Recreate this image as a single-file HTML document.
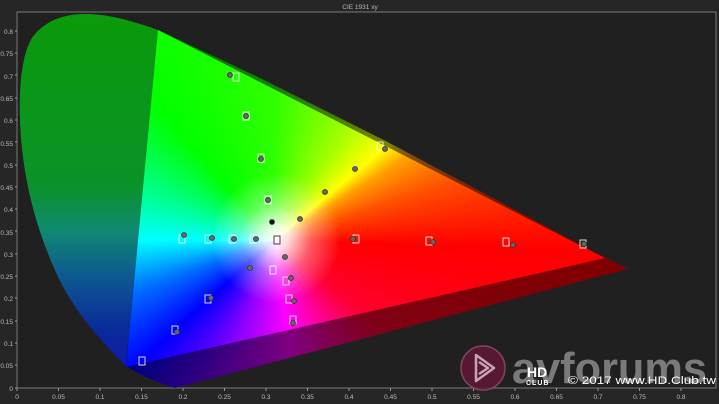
<!DOCTYPE html>
<html><head><meta charset="utf-8"><style>
html,body{margin:0;padding:0;background:#262626;width:719px;height:404px;overflow:hidden;position:relative;}
svg{display:block;font-family:"Liberation Sans",sans-serif;position:absolute;left:0;top:0;}
.l{position:absolute;left:0;top:0;width:719px;height:404px;}
.conic{background:conic-gradient(from 0deg at 275px 240px,#30ff00 0deg,#a0ff00 32deg,#ffff00 50deg,#ffa000 58deg,#ff5000 72deg,#ff0000 92deg,#ff0030 130deg,#ff00b0 155deg,#ff00ff 172deg,#9000ff 200deg,#0000ff 228deg,#0070ff 250deg,#00ffff 270deg,#00ff90 290deg,#00ff00 318deg,#30ff00 360deg);}
#loc{clip-path:path('M175,388 C150,380 135,372 125,365 C95,335 70,305 55,270 C35,225 22,175 20,120 C19,85 22,55 32,38 C45,20 65,14 85,14 C110,14 135,22 158,30 L260,78 L385,140.6 L494.4,198.8 L591,250.5 L628,269 Z');}
#locin{filter:brightness(0.5);}
#left{clip-path:polygon(0 0,161px 0,122px 404px,0 404px);background:linear-gradient(to bottom,#0a9a0a 14px,#0b9228 185px,#0f8a70 230px,#0d5a90 275px,#0a2a9a 330px,#1a10b0 388px);}
#tri{clip-path:polygon(158px 30px,605px 258px,126px 367px);}
#white{background:radial-gradient(circle at 276px 238px,rgba(255,255,255,1) 0,rgba(255,255,255,.85) 12px,rgba(255,255,255,.35) 35px,rgba(255,255,255,0) 65px);}
</style></head><body>
<svg width="719" height="404" viewBox="0 0 719 404" xmlns="http://www.w3.org/2000/svg">
<rect x="0" y="0" width="719" height="404" fill="#262626"/>
<rect x="17" y="12" width="699" height="376" fill="#202020" stroke="#7a7a7a" stroke-width="1"/>
</svg>
<div class="l" id="loc"><div class="l conic" id="locin"></div><div class="l" id="left"></div></div>
<div class="l" id="tri"><div class="l conic"></div><div class="l" id="white"></div></div>
<svg width="719" height="404" viewBox="0 0 719 404" xmlns="http://www.w3.org/2000/svg">
<text x="360" y="9" font-size="6.5" fill="#bbb" text-anchor="middle">CIE 1931 xy</text>
<g fill="none" stroke="#fff" stroke-width="1" opacity="0.85">
<rect x="233" y="73" width="6" height="8"/><rect x="243" y="112" width="6" height="8"/><rect x="258" y="154" width="6" height="8"/><rect x="265" y="196" width="6" height="8"/>
<rect x="274" y="236" width="6" height="8" stroke="#222"/><rect x="283" y="277" width="6" height="8"/><rect x="286" y="295" width="6" height="8"/><rect x="290" y="316" width="6" height="8"/>
<rect x="270" y="266" width="6" height="8"/><rect x="205" y="295" width="6" height="8"/><rect x="172" y="326" width="6" height="8"/><rect x="139" y="357" width="6" height="8"/>
<rect x="179" y="235" width="6" height="8"/><rect x="205" y="235" width="6" height="8"/><rect x="229" y="235" width="6" height="8"/><rect x="250" y="235" width="6" height="8"/>
<rect x="353" y="235" width="6" height="8"/><rect x="426" y="237" width="6" height="8"/><rect x="503" y="238" width="6" height="8"/><rect x="580" y="240" width="6" height="8"/><rect x="377" y="142" width="6" height="8"/>
</g>
<g fill="#666" stroke="#333" stroke-width="0.8">
<circle cx="230" cy="75" r="2.5"/><circle cx="246" cy="116" r="2.5"/><circle cx="261" cy="159" r="2.5"/><circle cx="268" cy="200" r="2.5"/>
<circle cx="325" cy="192" r="2.5"/><circle cx="355" cy="169" r="2.5"/><circle cx="385" cy="149" r="2.5"/><circle cx="300" cy="219" r="2.5"/>
<circle cx="272" cy="222" r="2.5" fill="#111"/><circle cx="285" cy="257" r="2.5"/><circle cx="250" cy="268" r="2.5"/><circle cx="291" cy="278" r="2.5"/><circle cx="294" cy="301" r="2.5"/><circle cx="293" cy="323" r="2.5"/>
<circle cx="211" cy="298" r="2.5"/><circle cx="177" cy="332" r="2.5"/><circle cx="184" cy="235" r="2.5"/><circle cx="212" cy="238" r="2.5"/><circle cx="234" cy="239" r="2.5"/><circle cx="256" cy="239" r="2.5"/>
<circle cx="353" cy="239" r="2.5"/><circle cx="433" cy="242" r="2.5"/><circle cx="513" cy="245" r="2.5"/><circle cx="584" cy="244" r="2.5"/>
</g>

<g font-size="6.5" fill="#bbb" text-anchor="end">
<text x="13" y="34">0.8</text><text x="13" y="56">0.75</text><text x="13" y="79">0.7</text><text x="13" y="101">0.65</text><text x="13" y="123">0.6</text><text x="13" y="146">0.55</text><text x="13" y="168">0.5</text><text x="13" y="190">0.45</text><text x="13" y="212">0.4</text><text x="13" y="235">0.35</text><text x="13" y="257">0.3</text><text x="13" y="279">0.25</text><text x="13" y="301">0.2</text><text x="13" y="324">0.15</text><text x="13" y="346">0.1</text><text x="13" y="368">0.05</text><text x="13" y="391">0</text>
</g>
<g stroke="#999" stroke-width="1">
<path d="M15,31H17M15,53H17M15,75H17M15,98H17M15,120H17M15,142H17M15,165H17M15,187H17M15,209H17M15,231H17M15,254H17M15,276H17M15,298H17M15,321H17M15,343H17M15,365H17M15,388H17"/>
<path d="M17,388V391M58.5,388V391M100,388V391M141.5,388V391M183,388V391M224.5,388V391M266,388V391M307.5,388V391M349,388V391M390.5,388V391M432,388V391M473.5,388V391M515,388V391M556.5,388V391M598,388V391M639.5,388V391M681,388V391"/>
</g>
<g font-size="6.5" fill="#bbb" text-anchor="middle">
<text x="17" y="399">0</text><text x="58.5" y="399">0.05</text><text x="100" y="399">0.1</text><text x="141.5" y="399">0.15</text><text x="183" y="399">0.2</text><text x="224.5" y="399">0.25</text><text x="266" y="399">0.3</text><text x="307.5" y="399">0.35</text><text x="349" y="399">0.4</text><text x="390.5" y="399">0.45</text><text x="432" y="399">0.5</text><text x="473.5" y="399">0.55</text><text x="515" y="399">0.6</text><text x="556.5" y="399">0.65</text><text x="598" y="399">0.7</text><text x="639.5" y="399">0.75</text><text x="681" y="399">0.8</text>
</g>

<circle cx="483" cy="368" r="22" fill="#5e1836" stroke="#8a4a66" stroke-width="1.5" opacity="0.9"/>
<path d="M476,355 L494,368 L476,381 Z M479,362 L488,368 L479,374" fill="none" stroke="#c9a3b4" stroke-width="2.5" stroke-linejoin="round"/>
<text x="512" y="383" font-size="44" font-weight="bold" fill="#8a8a8a" opacity="0.85" textLength="195" lengthAdjust="spacingAndGlyphs">avforums</text>
<text x="527" y="377" font-size="14" font-weight="bold" fill="#fff">HD</text>
<text x="526" y="385" font-size="7" font-weight="bold" fill="#fff" letter-spacing="1">CLUB</text>
<text x="568" y="384" font-size="11" fill="#fff" textLength="148" lengthAdjust="spacingAndGlyphs">© 2017 www.HD.Club.tw</text>
</svg>
</body></html>
